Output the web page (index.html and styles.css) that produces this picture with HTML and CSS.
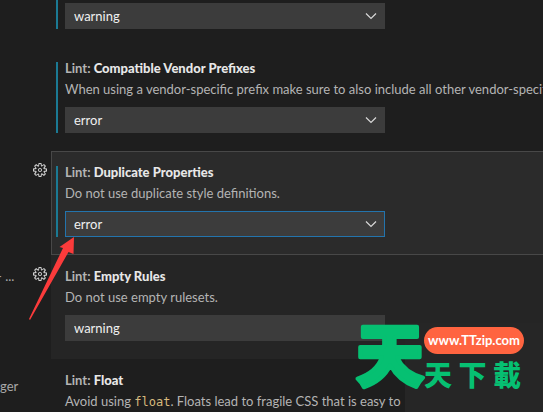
FILE: index.html
```html
<!DOCTYPE html>
<html lang="en">
<head>
    <meta charset="UTF-8">
    <meta name="viewport" content="width=device-width, initial-scale=1.0">
    <title>Settings</title>
    <link rel="stylesheet" href="styles.css">
</head>
<body>

    <svg class="defs" aria-hidden="true">
        <symbol id="chevron" viewBox="0 0 12 8">
            <path d="M1 1.5l5 5 5-5" fill="none" stroke="currentColor" stroke-width="1.2"/>
        </symbol>
        <symbol id="gear" viewBox="0 0 16 16">
            <path fill="currentColor" fill-rule="evenodd" d="M9.1 4.4L8.6 2H7.4l-.5 2.4-.7.3-2-1.3-.9.8 1.3 2-.2.7-2.4.5v1.2l2.4.5.3.8-1.3 2 .8.8 2-1.3.8.3.4 2.3h1.2l.5-2.4.8-.3 2 1.3.8-.8-1.3-2 .3-.8 2.3-.4V7.4l-2.4-.5-.3-.8 1.3-2-.8-.8-2 1.3-.7-.2zM9.4 1l.5 2.4L12 2.1l2 2-1.4 2.1 2.4.4v2.8l-2.4.5L14 12l-2 2-2.1-1.4-.5 2.4H6.6l-.5-2.4L4 13.9l-2-2 1.4-2.1L1 9.4V6.6l2.4-.5L2.1 4l2-2 2.1 1.4.4-2.4h2.8zm.6 7c0 1.1-.9 2-2 2s-2-.9-2-2 .9-2 2-2 2 .9 2 2zM8 9c.6 0 1-.4 1-1s-.4-1-1-1-1 .4-1 1 .4 1 1 1z"/>
        </symbol>
    </svg>

    <div class="settings">
        <nav class="toc">
            <a href="#empty-rules" class="toc-short">- ...</a>
            <a href="#float">ger</a>
        </nav>

        <main class="list">
            <section class="item first">
                <div class="content modified">
                    <div class="select">
                        <select aria-label="Lint: Box Model"><option>warning</option></select>
                        <svg><use href="#chevron"/></svg>
                    </div>
                </div>
            </section>

            <section class="item">
                <div class="content modified">
                    <label for="vendor-prefixes">Lint: <b>Compatible Vendor Prefixes</b></label>
                    <p>When using a vendor-specific prefix make sure to also include all other vendor-specific properties.</p>
                    <div class="select">
                        <select id="vendor-prefixes"><option>error</option></select>
                        <svg><use href="#chevron"/></svg>
                    </div>
                </div>
            </section>

            <section class="item focused">
                <button class="gear" aria-label="More actions"><svg><use href="#gear"/></svg></button>
                <div class="content modified">
                    <label for="duplicate">Lint: <b>Duplicate Properties</b></label>
                    <p>Do not use duplicate style definitions.</p>
                    <div class="select">
                        <select id="duplicate"><option>error</option></select>
                        <svg><use href="#chevron"/></svg>
                    </div>
                </div>
            </section>

            <section class="item hovered">
                <button class="gear" aria-label="More actions"><svg><use href="#gear"/></svg></button>
                <div class="content">
                    <label for="empty-rules">Lint: <b>Empty Rules</b></label>
                    <p>Do not use empty rulesets.</p>
                    <div class="select">
                        <select id="empty-rules"><option>warning</option></select>
                    </div>
                </div>
            </section>

            <section class="item last">
                <div class="content">
                    <h2>Lint: <b>Float</b></h2>
                    <p id="float">Avoid using <code>float</code>. Floats lead to fragile CSS that is easy to</p>
                </div>
            </section>
        </main>
    </div>

    <svg class="arrow" viewBox="0 0 46 84" aria-hidden="true">
        <path d="M45 1L30.500 11l3.500 1L0 83l1 1 38.500-68 5 2z" fill="#fb3b3b"/>
    </svg>

    <div class="watermark" lang="zh">
        <svg class="mark" viewBox="0 0 72 66"><text x="38" y="58" text-anchor="middle">天</text></svg>
        <div>
            <span class="url">www.TTzip.com</span>
            <span class="name"><span>天</span><span>下</span><span>載</span></span>
        </div>
    </div>

</body>
</html>
```
FILE: styles.css
```css
* {
    box-sizing: border-box;
}

body {
    margin: 0;
    height: 100vh;
    position: relative;
    overflow: hidden;
    background: #1e1e1e;
    color: #b4b4b4;
    font-family: Lato, "Open Sans", sans-serif;
    font-size: 13px;
}

.defs {
    display: none;
}

.settings {
    display: flex;
}

.toc {
    width: 32px;
    padding-top: 265px;
    flex-shrink: 0;
    display: flex;
    flex-direction: column;
    align-items: flex-start;
    gap: 88px;
}

.toc a {
    color: #a8a8a8;
    line-height: 22px;
    text-decoration: none;
    white-space: nowrap;
}

.toc .toc-short {
    margin-left: -3px;
}

.list {
    flex: 1;
    min-width: 0;
}

.item {
    display: grid;
    grid-template-columns: 19px 1fr;
    height: 104px;
}

.first {
    height: 47px;
}

.last {
    height: auto;
}

.content {
    grid-column: 2;
    min-width: 0;
    padding: 14px 0 18px 14px;
    position: relative;
    overflow: hidden;
}

.first .content {
    padding-top: 3px;
}

.last .content {
    padding-bottom: 0;
}

.modified::before {
    content: "";
    position: absolute;
    left: 5px;
    top: 15px;
    bottom: 18px;
    width: 2px;
    background: #1b7a94;
}

.first .modified::before {
    top: 0;
}

.focused .content {
    background: #2b2b2b;
    box-shadow: inset 0 1px #484848, inset 1px 0 #484848, inset 0 -1px #484848;
}

.hovered .content {
    background: #252525;
}

.gear {
    width: 16px;
    height: 16px;
    margin-top: 11px;
    padding: 0;
    border: 0;
    background: none;
    color: #d0d0d0;
}

.gear svg {
    display: block;
    width: 16px;
    height: 16px;
}

label,
h2 {
    display: block;
    margin: 0;
    font-size: 13px;
    line-height: 14px;
    font-weight: bold;
}

b {
    color: #e7e7e7;
}

p {
    margin: 4px 0 8px;
    line-height: 20px;
    white-space: nowrap;
}

.last p {
    margin-bottom: 0;
}

code {
    font-family: "DejaVu Sans Mono", monospace;
    font-size: 12px;
    line-height: 16px;
    color: #d7ba7d;
}

.select {
    position: relative;
    width: 320px;
    max-width: 100%;
}

select {
    display: block;
    appearance: none;
    width: 100%;
    height: 26px;
    padding: 0 8px;
    border: 1px solid #3c3c3c;
    border-radius: 0;
    background: #3c3c3c;
    color: #f0f0f0;
    font: inherit;
}

.focused select {
    border-color: #2374ad;
}

.select svg {
    position: absolute;
    right: 8px;
    top: 9px;
    width: 12px;
    height: 8px;
    color: #d8d8d8;
}

.arrow {
    position: absolute;
    left: 29px;
    top: 236px;
    width: 46px;
    height: 84px;
}

.watermark {
    position: absolute;
    right: 0;
    bottom: 0;
    display: flex;
    align-items: flex-start;
    padding: 0 19px 22px 0;
    /* lighter panel behind the right part of the logo */
    background: linear-gradient(to right, transparent 53px, #262626 53px);
    color: #06c072;
    font-family: "Noto Sans CJK TC", sans-serif;
    font-weight: 900;
}

.mark {
    width: 72px;
    height: 66px;
    overflow: visible;
    font-size: 68px;
    fill: #06c072;
    stroke: #06c072;
    stroke-width: 4px;
    stroke-linejoin: round;
}

.url {
    display: block;
    width: 100px;
    margin-top: 4px;
    border-radius: 14px;
    background: #ff6440;
    color: #fff;
    font: bold 13px/27px Lato, sans-serif;
    text-align: center;
}

.name {
    display: flex;
    justify-content: space-between;
    padding-right: 3px;
    margin-top: 4px;
    font-size: 28px;
    line-height: 32px;
}
```
